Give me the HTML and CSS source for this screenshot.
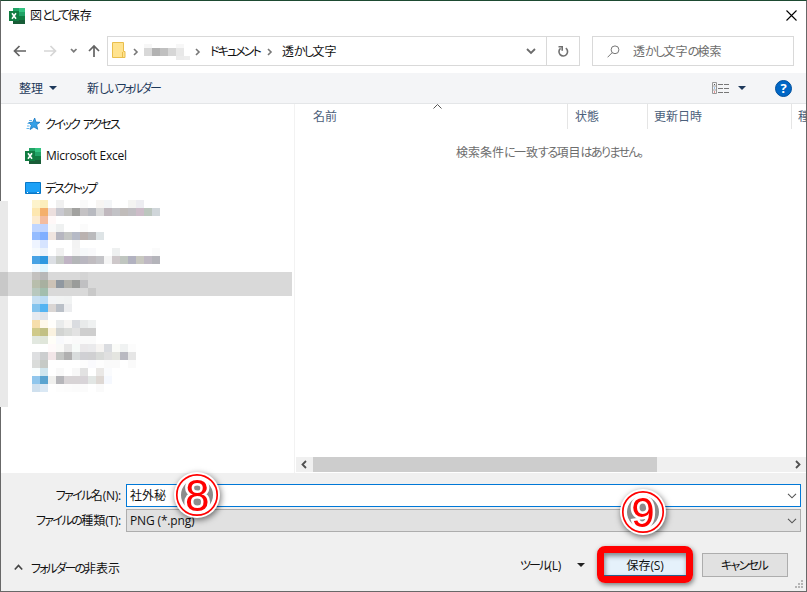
FILE: index.html
```html
<!DOCTYPE html>
<html lang="ja">
<head>
  <meta charset="UTF-8" />
  <meta name="viewport" content="width=device-width, initial-scale=1" />
  <title>図として保存</title>
  <link rel="stylesheet" href="styles.css">
</head>
<body>
  <div class="dialog">
    <!-- タイトルバー -->
    <header class="titlebar">
      <svg class="excel" width="16" height="16" viewBox="0 0 16 16">
        <path fill="#21a366" d="M4 0h12v16H4z"/>
        <path fill="#33c481" d="M10 0h6v4h-6z"/>
        <path fill="#107c41" d="M4 4h6v8H4zM10 8h6v4h-6z"/>
        <path fill="#185c37" d="M4 12h12v4H4z"/>
        <path fill="#107c41" d="M0 3h10v10H0z"/>
        <path stroke="#fff" stroke-width="1.6" d="M3 5.3l4 5.4M7 5.3l-4 5.4"/>
      </svg>
      <h1>図<span class="kn">として</span>保存</h1>
      <svg class="close" width="11" height="11" viewBox="0 0 11 11"><path d="M.5.5l10 10M10.5.5l-10 10" stroke="#000" stroke-width="1.1"/></svg>
    </header>

    <!-- アドレスバー -->
    <nav class="navbar">
      <svg class="arrows" width="88" height="16" viewBox="0 0 88 16" fill="none" stroke-width="1.7">
        <path stroke="#636363" d="M13 8H2M6.500 3L1.500 8l5 5"/>
        <path stroke="#d6d6d6" d="M31 8h11M37.500 3l5 5-5 5"/>
        <path stroke="#7b7b7b" d="M58 6l2.700 2.700L63.500 6"/>
        <path stroke="#636363" d="M81 14V3M76 8l5-5 5 5"/>
      </svg>
      <div class="address">
        <svg class="folder" width="14" height="17" viewBox="0 0 14 17"><path d="M.5.5h11v9h1.500v6H.5z" fill="#ffe38f" stroke="#e9be4c"/><path d="M10.500 15V10" stroke="#e9be4c"/></svg>
        <svg class="sep" width="6" height="8" viewBox="0 0 6 8"><path d="M1 1l3 3-3 3"/></svg>
        <div class="mosaic" id="user-mosaic"></div>
        <svg class="sep second" width="6" height="8" viewBox="0 0 6 8"><path d="M1 1l3 3-3 3"/></svg>
        <span class="crumb kn doc">ドキュメント</span>
        <svg class="sep" width="6" height="8" viewBox="0 0 6 8"><path d="M1 1l3 3-3 3"/></svg>
        <span class="crumb last">透<span class="kn">かし</span>文字</span>
        <svg class="drop" width="10" height="7" viewBox="0 0 10 7"><path d="M1 1l4 4 4-4" fill="none" stroke="#6b6b6b" stroke-width="1.800"/></svg>
        <div class="refresh">
          <svg width="12" height="13" viewBox="0 0 12 13" fill="none" stroke="#707070" stroke-width="1.600"><path d="M8.800 3.200A4.300 4.300 0 1 1 3.600 3.300"/><path d="M1.500 1.800h3.700v4"/></svg>
        </div>
      </div>
      <div class="search">
        <svg width="13" height="13" viewBox="0 0 13 13" fill="none" stroke="#777"><circle cx="8" cy="4.800" r="3.900"/><path d="M5.200 7.600L.6 12.300"/></svg>
        <span>透<span class="kn">かし</span>文字<span class="kn">の</span>検索</span>
      </div>
    </nav>

    <!-- ツールバー -->
    <div class="toolbar">
      <span class="organize">整理</span>
      <i class="tri"></i>
      <span class="new-folder">新<span class="kn">しいフォルダー</span></span>
      <svg class="view" width="17" height="12" viewBox="0 0 17 12" fill="none">
        <path d="M.5.5h4v11h-4z" stroke="#999"/><path d="M1 4h3M1 8h3" stroke="#aaa"/>
        <path d="M2 2.500h1" stroke="#555"/><path d="M2 6h1" stroke="#3a8ad8"/><path d="M2 10h1" stroke="#d33"/>
        <path d="M6 2.500h11M6 6.500h11M6 10.500h11" stroke="#777" stroke-dasharray="5 1"/>
      </svg>
      <i class="tri"></i>
      <span class="help">?</span>
    </div>

    <main class="body">
      <aside class="tree">
        <div class="node">
          <svg width="16" height="16" viewBox="0 0 16 16"><path d="M9.700 2l1.200 4.100 4.100.2-3.400 2.500 1.100 4.500-3.800-2.400L5.200 13.600l1.100-4.300L3.700 6.600l4.100-.4z" fill="#35a1e8" stroke="#1a78c2" stroke-width=".8"/><path d="M4 4.500h3M2.500 7.500h2M2 10h2.500M1.500 12.500h3" stroke="#62b5ec"/></svg>
          <span class="kn">クイック アクセス</span>
        </div>
        <div class="node">
          <svg width="16" height="16" viewBox="0 0 16 16">
            <path fill="#21a366" d="M4 0h12v16H4z"/>
            <path fill="#33c481" d="M10 0h6v4h-6z"/>
            <path fill="#107c41" d="M4 4h6v8H4zM10 8h6v4h-6z"/>
            <path fill="#185c37" d="M4 12h12v4H4z"/>
            <path fill="#107c41" d="M0 3h10v10H0z"/>
            <path stroke="#fff" stroke-width="1.600" d="M3 5.300l4 5.400M7 5.300l-4 5.400"/>
          </svg>
          <span class="latin">Microsoft Excel</span>
        </div>
        <div class="node">
          <svg width="16" height="16" viewBox="0 0 16 16"><path d="M.5 2.500h15v11H.5z" fill="#1ca1f7" stroke="#0878c8"/><path d="M1 12.500h14" stroke="#1489dc"/><path d="M2 12.500h1M12 12.500h2" stroke="#fff"/></svg>
          <span class="kn">デスクトップ</span>
        </div>
        <div class="strip"></div>
        <div class="folders">
          <div class="selected"></div>
          <div class="mosaic" id="tree-mosaic"></div>
        </div>
      </aside>

      <section class="list">
        <div class="columns">
          <span class="col name">名前
            <svg class="sort" width="9" height="5" viewBox="0 0 9 5"><path d="M.5 4.500l4-4 4 4" fill="none" stroke="#555"/></svg>
          </span>
          <span class="col state">状態</span>
          <span class="col date">更新日時</span>
          <span class="col kind">種類</span>
        </div>
        <p class="empty">検索条件<span class="kn">に</span>一致<span class="kn">する</span>項目<span class="kn">はありません。</span></p>
        <div class="scrollbar">
          <svg width="17" height="15" viewBox="0 0 17 15"><path d="M10 4L6.500 7.500 10 11"/></svg>
          <div class="track"><div class="thumb"></div></div>
          <svg width="17" height="15" viewBox="0 0 17 15"><path d="M7 4l3.500 3.500L7 11"/></svg>
        </div>
      </section>
    </main>

    <!-- ファイル名と保存ボタン -->
    <footer class="bottom">
      <div class="field">
        <label><span class="kn">ファイル</span>名<span class="latin">(N):</span></label>
        <div class="combo active"><span>社外秘</span><svg width="10" height="6" viewBox="0 0 10 6"><path d="M1 .8l4 4 4-4"/></svg></div>
      </div>
      <div class="field">
        <label><span class="kn">ファイルの</span>種類<span class="latin">(T):</span></label>
        <div class="combo"><span class="latin png">PNG (*.png)</span><svg width="10" height="6" viewBox="0 0 10 6"><path d="M1 .8l4 4 4-4"/></svg></div>
      </div>
      <div class="actions">
        <svg width="9" height="7" viewBox="0 0 9 7"><path d="M.8 5.500l3.700-4 3.700 4" fill="none" stroke="#444" stroke-width="1.700"/></svg>
        <span class="hide-folders"><span class="kn">フォルダーの</span>非表示</span>
        <span class="tools"><span class="kn">ツール</span><span class="latin">(L)</span></span>
        <i class="tri dark"></i>
        <div class="save-mark"><button class="save">保存<span class="latin">(S)</span></button></div>
        <button class="cancel kn">キャンセル</button>
      </div>
      <svg class="grip" width="8" height="8" viewBox="0 0 8 8" fill="#b5b5b5"><path d="M6 0h2v2H6zM3 3h2v2H3zM6 3h2v2H6zM0 6h2v2H0zM3 6h2v2H3zM6 6h2v2H6z"/></svg>
    </footer>

    <!-- 手順番号 -->
    <svg class="step step-8" width="48" height="48" viewBox="0 0 48 48">
      <circle cx="24" cy="24" r="23" fill="#fff"/>
      <circle cx="24" cy="24" r="16" fill="#8c8c8c"/>
      <circle cx="24" cy="24" r="20.200" fill="none" stroke="#f00" stroke-width="1.700"/>
      <text x="24.300" y="40">8</text>
    </svg>
    <svg class="step step-9" width="48" height="48" viewBox="0 0 48 48">
      <circle cx="24" cy="24" r="23" fill="#fff"/>
      <circle cx="24" cy="24" r="16" fill="#8c8c8c"/>
      <circle cx="24" cy="24" r="20.200" fill="none" stroke="#f00" stroke-width="1.700"/>
      <text class="nine" x="24" y="38.500">9</text>
    </svg>
  </div>
  <script src="mosaic.js"></script>
</body>
</html>
```
FILE: styles.css
```css
* {
  margin: 0;
  padding: 0;
  box-sizing: border-box;
}
body {
  width: 807px;
  height: 592px;
  overflow: hidden;
  font-family: "Noto Sans CJK JP", sans-serif;
  font-size: 12px;
  line-height: 16px;
  color: #111;
  background: #fff;
}
svg {
  display: block;
  flex: none;
}
.dialog {
  position: relative;
  width: 807px;
  height: 592px;
  border: 1px solid #686868;
  border-top-color: #1d4a31;
  display: flex;
  flex-direction: column;
  white-space: nowrap;
}
/* 幅の狭いかな */
.kn {
  font-feature-settings: "palt";
  letter-spacing: -1.6px;
}
.latin {
  font-family: "Open Sans", sans-serif;
  letter-spacing: -0.25px;
}

.titlebar {
  height: 30px;
  display: flex;
  align-items: center;
  padding: 0 9px 0 8px;
}
.titlebar h1 {
  font-size: 12px;
  font-weight: normal;
  margin: 0 0 2px 5px;
}
.titlebar .kn {
  letter-spacing: -1.9px;
}
.close {
  margin: 0 0 1px auto;
}

.navbar {
  height: 42px;
  display: flex;
  align-items: flex-start;
  padding: 5px 12px 0 12px;
}
.arrows {
  margin-top: 7px;
}
.address {
  width: 473px;
  height: 30px;
  margin-left: 6px;
  border: 1px solid #d9d9d9;
  display: flex;
  align-items: center;
}
.folder {
  margin: 0 0 2px 4px;
}
.sep {
  margin: 1px 0 0 7px;
}
.sep.second {
  margin-left: 5px;
}
.sep path {
  fill: none;
  stroke: #777;
  stroke-width: 1.6;
}
.mosaic {
  display: grid;
  grid-auto-rows: 8px;
}
#user-mosaic {
  grid-template-columns: repeat(5, 8px) 6px;
  grid-template-rows: 4px 8px 4px;
  margin: 1px 0 0 5px;
}
.crumb {
  margin: 0 0 1px 9px;
}
.doc {
  width: 50px;
  letter-spacing: -1.9px;
}
.drop {
  margin-left: auto;
}
.refresh {
  width: 33px;
  height: 28px;
  margin-left: 10px;
  border-left: 1px solid #d9d9d9;
  display: flex;
  align-items: center;
  justify-content: center;
}
.search {
  width: 202px;
  height: 30px;
  margin-left: 12px;
  border: 1px solid #d9d9d9;
  display: flex;
  align-items: center;
  padding-left: 14px;
  color: #6d6d6d;
}
.search > span {
  margin: 0 0 1px 13px;
}

.toolbar {
  height: 31px;
  background: #f4f5f7;
  border-bottom: 1px solid #e4e6e8;
  display: flex;
  align-items: center;
  padding: 0 14px 0 18px;
  color: #1e395b;
}
.toolbar .kn,
.hide-folders .kn {
  letter-spacing: -2px;
}
.tri {
  border: 4px solid transparent;
  border-top-color: #1e395b;
  border-bottom: 0;
  margin-left: 6px;
}
.tri.dark {
  border-top-color: #222;
}
.new-folder {
  margin-left: 30px;
}
.view {
  margin-left: auto;
}
.view + .tri {
  margin-left: 9px;
}
.help {
  width: 17px;
  height: 17px;
  margin-left: 29px;
  border-radius: 50%;
  border: 1px solid #004f9c;
  background: #0067c6;
  color: #fff;
  font: bold 13px/15px "Open Sans", sans-serif;
  text-align: center;
}

.body {
  height: 369px;
  display: flex;
}
.tree {
  position: relative;
  width: 294px;
  border-right: 1px solid #f2f2f2;
  padding-top: 4px;
}
.node {
  height: 32px;
  display: flex;
  align-items: center;
  padding-left: 24px;
}
.node span {
  margin-left: 5px;
}
.node .kn {
  margin-left: 4px;
  letter-spacing: -1.9px;
  word-spacing: 3px;
}
.strip {
  position: absolute;
  left: -1px;
  top: 97px;
  width: 8px;
  height: 206px;
  background: #e9e9e9;
}
.folders {
  position: absolute;
  left: -1px;
  top: 96px;
}
.selected {
  position: absolute;
  left: 0;
  top: 72px;
  width: 292px;
  height: 24px;
  background: #d9d9d9;
  border-left: 8px solid #c8c8c8;
}
#tree-mosaic {
  position: relative;
  grid-template-columns: repeat(16, 8px);
  margin-left: 32px;
}

.list {
  width: 511px;
  display: flex;
  flex-direction: column;
}
.columns {
  height: 25px;
  display: flex;
  overflow: hidden;
  color: #4c607a;
}
.col {
  flex: none;
  position: relative;
  border-right: 1px solid #e5e5e5;
  padding: 4px 0 0 7px;
}
.name {
  width: 273px;
  padding-left: 18px;
}
.state {
  width: 80px;
}
.date {
  width: 144px;
  padding-left: 6px;
}
.kind {
  width: 60px;
  padding-left: 6px;
}
.sort {
  position: absolute;
  left: 138px;
  top: 0;
}
.empty {
  margin: 15px 0 0 161px;
  color: #6d6d6d;
}
.scrollbar {
  height: 15px;
  margin: auto 0 1px 1px;
  background: #f0f0f0;
  display: flex;
}
.scrollbar path {
  fill: none;
  stroke: #505050;
  stroke-width: 1.8;
}
.track {
  flex: 1;
}
.thumb {
  width: 344px;
  height: 15px;
  background: #cdcdcd;
}

.bottom {
  position: relative;
  flex: 1;
  background: #f0f0f0;
  padding-top: 11px;
}
.field {
  display: flex;
  align-items: center;
  margin-bottom: 2px;
}
.field label {
  width: 120px;
  text-align: right;
}
.combo {
  width: 675px;
  height: 23px;
  margin-left: 5px;
  border: 1px solid #adadad;
  background: #e1e1e1;
  display: flex;
  align-items: center;
  justify-content: space-between;
  padding: 0 3px;
}
.combo.active {
  border-color: #0078d7;
  background: #fff;
}
.combo path {
  fill: none;
  stroke: #555;
  stroke-width: 1.1;
}
.active span {
  margin-bottom: 2px;
}
.png {
  letter-spacing: -0.15px;
}
.actions {
  display: flex;
  align-items: center;
  height: 37px;
  margin-top: 14px;
  padding-left: 13px;
}
.actions > svg {
  margin-top: 6px;
}
.hide-folders {
  margin: 7px 0 0 8px;
  width: 90px;
}
.tools {
  margin: 1px 0 0 399px;
  width: 42px;
}
.tools .kn {
  letter-spacing: -1.9px;
}
.actions .tri {
  margin: 1px 0 0 15px;
}
.save-mark {
  width: 96px;
  height: 37px;
  margin-left: 12px;
  border: 7px solid #f00;
  border-radius: 8px;
  box-shadow: 1px 2px 5px rgb(0 0 0 / 0.5);
}
button {
  font: inherit;
  color: inherit;
}
.save {
  display: block;
  width: 82px;
  height: 23px;
  padding-top: 2px;
  border: 0;
  border-bottom: 1px solid #25618f;
  background: #e5f1fb;
  box-shadow: inset 1px 3px 5px rgb(0 0 0 / 0.45);
}
.cancel {
  width: 86px;
  height: 24px;
  margin: 1px 0 0 9px;
  padding-right: 2px;
  border: 1px solid #adadad;
  background: #e1e1e1;
}
.grip {
  position: absolute;
  right: 3px;
  bottom: 3px;
}

.step {
  position: absolute;
  overflow: visible;
  filter: drop-shadow(1px 2px 3px rgb(0 0 0 / 0.55));
}
.step-8 {
  left: 172px;
  top: 470px;
}
.step-9 {
  left: 618px;
  top: 487px;
}
.step text {
  font: 44px "Liberation Sans", sans-serif;
  text-anchor: middle;
  fill: #f00;
  stroke: #fff;
  stroke-width: 5px;
  paint-order: stroke;
}
.step .nine {
  font-size: 42px;
}
```
FILE: mosaic.js
```js
// 1行 = 8px、"-" は透明
const userRows = [
  "f7f7f7 - - - f7f7f7 -",
  "d8d8d8 b2b2b2 c0c0c0 d6d6d6 e8e8e8 -",
  "- - - - ebebeb ededed"
];

const treeRows = [
  "fdf3cc fceebc - f0f0f0 - - fafafa - f7f5f3 f3f5f7 - - f4f4f2 ededf1",
  "fde7b0 f4b06c ecdfde c9c9d0 c0c0be a2a2a0 c4c2c4 b8bac0 dadada c0b8be c2c2c6 c0bcba c0bec2 ccbcc8 bcc6be d0d6da",
  "fcebd0 f4bc9f fff8f8",
  "c0d6ff c0d4ff f9f9f9 eff1f1 - - fbfbfb",
  "94bcff 80aeff f0e5e0 b6b6c0 c4c6c4 b6bac6 bab2b0 bababc dee4e6",
  "eef4ff d6e4ff - - - f3f3f3",
  "f6fafd ecf3fb - f0f0f0 - f4f4f4 f6f8fa f9f9fb - - eef0f0 - - - - fbfbfb",
  "48a2e4 2e98e0 dcdfe4 c8ccc8 c0b4c4 b4b6b8 b9b7c0 c0bcc0 c4c4c8 f5f5f5 cec8ca c0c6c0 b2b2c0 c8c8c0 bfb9c3 b4b4ba",
  "f0f8fe e0f6fe",
  "c3c1bf b8b8b8 - - - - d4d4d4",
  "b8beac a8b0a0 ccc2b6 9098a0 b0b0aa 9a9c9a c0c0c2",
  "b8c8be a2beae - - - - - c9c9c9",
  "c8e0f2 bcdcf4 f2f4f6 f2f4f4 f1f3f3",
  "84c4ee 54b4f2 dad6d4 bac0c8 ecedef",
  "e6eaf0 e0e4ea",
  "f6deac fff8ea fffefb e9ebeb f6f5f3 dadce0 e8eaea eff1f1",
  "d0ca8a c2c084 faf2e0 d2d4d2 dadcda e2e2e2 cecece cecece",
  "e2e8e0 e0e6da fffef8 f8f9fc fcfcfc fafafa fafafa fafafa",
  "- - fffafa fafaf8 e8e8e8 f7fbf9 eae8ea eaeaec f6f4f2 dadce0 fafbf8 f0f2f2 fcfcfc",
  "dedfe1 cccecf f2e6e8 c4c6c4 b0b0b0 d8dcdc d0d0d4 d0d0d2 d8dad8 e0e0e0 e4e5e0 b9b9c1 e6e6e6",
  "dadcda c6cac6 - - - - fdfdfd fafafd fdfdfd fafafa fafafa - fafafa",
  "f9fefe d0e6ee - f9f9f9 - f8f8f8 e2e2e2 - eae8e6 fafbfd",
  "90c6ec 5aa4d0 f0f0ee b6b6ba d8d4d6 d8d4d6 d8d4d8 e2e6e4 ded8d4 f5f8fe",
  "cfe0ee dae8f4 - fdfdfd fcfcfc fbfbfb fbfbfb - fafafa"
];

function drawMosaic(id, rows, cols) {
  const box = document.getElementById(id);
  rows.forEach(row => {
    const colors = row.split(" ");
    for (let i = 0; i < cols; i++) {
      const cell = document.createElement("i");
      if (colors[i] && colors[i] !== "-") {
        cell.style.backgroundColor = "#" + colors[i];
      }
      box.appendChild(cell);
    }
  });
}

drawMosaic("user-mosaic", userRows, 6);
drawMosaic("tree-mosaic", treeRows, 16);
```
